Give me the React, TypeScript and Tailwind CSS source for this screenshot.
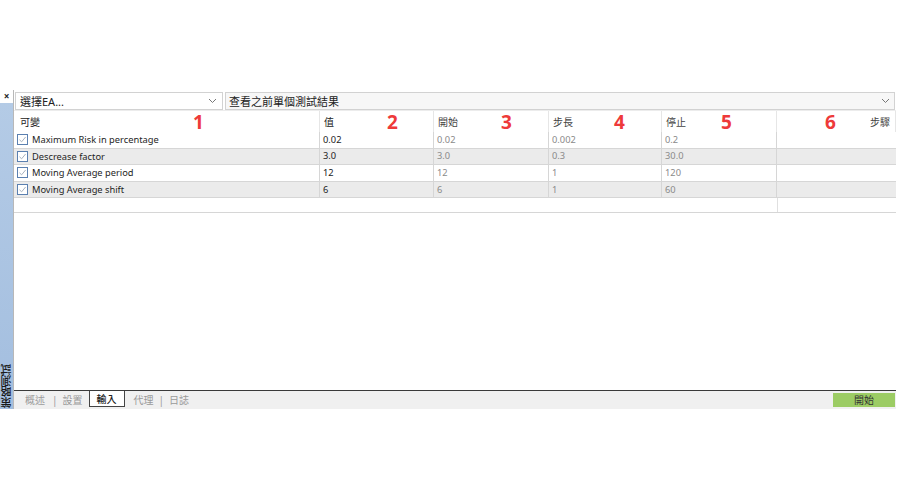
import React from "react";

const rows = [
  { name: "Maximum Risk in percentage", v: ["0.02", "0.02", "0.002", "0.2"], gray: false },
  { name: "Descrease factor", v: ["3.0", "3.0", "0.3", "30.0"], gray: true },
  { name: "Moving Average period", v: ["12", "12", "1", "120"], gray: false },
  { name: "Moving Average shift", v: ["6", "6", "1", "60"], gray: true },
];

const font = { fontFamily: '"Noto Sans", "Noto Sans CJK TC", sans-serif' };

function Chevron() {
  return (
    <svg width="9" height="6" viewBox="0 0 9 6" className="shrink-0">
      <path d="M1 1 L4.5 4.5 L8 1" fill="none" stroke="#777" strokeWidth="1" />
    </svg>
  );
}

function Check() {
  return (
    <div className="w-[11px] h-[11px] border border-[#5b80b0] bg-white flex items-center justify-center shrink-0">
      <svg width="9" height="9" viewBox="0 0 9 9">
        <path d="M1.5 4.8 L3.6 6.8 L7.6 2" fill="none" stroke="#a9b3bf" strokeWidth="1" />
      </svg>
    </div>
  );
}

function Num({ n, left }: { n: string; left: string }) {
  return (
    <span
      className={`absolute top-[2px] ${left} text-[19px] font-bold leading-none text-[#ee3a3a]`}
      style={{ fontFamily: '"Open Sans", sans-serif' }}
    >
      {n}
    </span>
  );
}

export default function App() {
  return (
    <div className="w-[900px] h-[500px] bg-white overflow-hidden text-[#222]" style={font}>
      <div className="pt-[90px] flex h-[409px]">
        {/* sidebar */}
        <div className="w-[14px] flex flex-col border-r border-[#b8b8b8] shrink-0">
          <div className="h-[13px] bg-white flex items-start justify-center text-[10px] font-bold leading-none text-[#222] pt-[1px]">
            ×
          </div>
          <div className="flex-1 bg-gradient-to-b from-[#b4cbe6] to-[#a3bedf] flex flex-col justify-end items-center pb-[1px]">
            <span className="[writing-mode:vertical-rl] rotate-180 text-[11px] leading-[12px] font-medium text-[#1a1a1a]">
              策略測試
            </span>
          </div>
        </div>

        {/* content */}
        <div className="flex-1 flex flex-col">
          {/* selects */}
          <div className="flex pt-[2px] pl-[1px] pr-[5px] h-[20px]">
            <div className="w-[208px] h-[18px] border border-[#d2d2d2] bg-white flex items-center pl-[4px] pr-[5px] text-[11px] leading-none">
              <span className="flex-1">選擇EA...</span>
              <Chevron />
            </div>
            <div className="flex-1 ml-[2px] h-[18px] border border-[#d2d2d2] bg-[#f7f7f7] flex items-center pl-[3px] pr-[4px] text-[11px] leading-none">
              <span className="flex-1">查看之前單個測試結果</span>
              <Chevron />
            </div>
          </div>

          {/* table */}
          <div className="mr-[4px] text-[9.3px]">
            <div className="flex h-[22px] border-t border-[#ececec] text-[10px]">
              <div className="relative w-[306px] border-r border-[#e6e6e6] pl-[6px] pt-[4px]">
                可變
                <Num n="1" left="left-[179px]" />
              </div>
              <div className="relative w-[114px] border-r border-[#e6e6e6] pl-[4px] pt-[4px]">
                值
                <Num n="2" left="left-[67px]" />
              </div>
              <div className="relative w-[115px] border-r border-[#e6e6e6] pl-[4px] pt-[4px] text-[#444]">
                開始
                <Num n="3" left="left-[67px]" />
              </div>
              <div className="relative w-[113px] border-r border-[#e6e6e6] pl-[4px] pt-[4px] text-[#444]">
                步長
                <Num n="4" left="left-[65px]" />
              </div>
              <div className="relative w-[115px] border-r border-[#e6e6e6] pl-[4px] pt-[4px] text-[#444]">
                停止
                <Num n="5" left="left-[59px]" />
              </div>
              <div className="relative flex-1 border-r border-[#e6e6e6] pr-[5px] pt-[4px] text-right text-[#444]">
                步驟
                <Num n="6" left="left-[48px]" />
              </div>
            </div>
            {rows.map((r) => (
              <div
                key={r.name}
                className={`flex h-[16.6px] border-b border-[#d6d6d6] items-stretch ${r.gray ? "bg-[#ebebeb]" : "bg-white"}`}
              >
                <div className="w-[306px] border-r border-[#d6d6d6] flex items-center pl-[3px] gap-[4px] text-[#1e1e1e]">
                  <Check />
                  <span className="leading-none">{r.name}</span>
                </div>
                <div className="w-[114px] border-r border-[#d6d6d6] flex items-center pl-[3px] text-[#222]">
                  {r.v[0]}
                </div>
                <div className="w-[115px] border-r border-[#d6d6d6] flex items-center pl-[3px] text-[#8a8a8a]">
                  {r.v[1]}
                </div>
                <div className="w-[113px] border-r border-[#d6d6d6] flex items-center pl-[3px] text-[#8a8a8a]">
                  {r.v[2]}
                </div>
                <div className="w-[115px] border-r border-[#d6d6d6] flex items-center pl-[3px] text-[#8a8a8a]">
                  {r.v[3]}
                </div>
                <div className="flex-1" />
              </div>
            ))}
            <div className="flex h-[15px] border-b border-[#d6d6d6]">
              <div className="w-[764px] border-r border-[#e0e0e0]" />
              <div className="flex-1" />
            </div>
          </div>

          <div className="flex-1" />

          {/* tab bar */}
          <div className="h-[19px] mr-[4px] border-t border-[#3a3a3a] bg-[#f0f0f0] flex items-start text-[10px] leading-none">
            <span className="ml-[11px] mt-[4px] text-[#9a9a9a]">概述</span>
            <span className="ml-[7px] mt-[4px] text-[#9a9a9a]">|</span>
            <span className="ml-[5px] mt-[4px] text-[#9a9a9a]">設置</span>
            <div className="ml-[6px] w-[36px] h-[16px] bg-white border-l border-r border-b border-[#444] flex items-center justify-center text-[#222] font-medium">
              輸入
            </div>
            <span className="ml-[9px] mt-[4px] text-[#9a9a9a]">代理</span>
            <span className="ml-[5px] mt-[4px] text-[#9a9a9a]">|</span>
            <span className="ml-[5px] mt-[4px] text-[#9a9a9a]">日誌</span>
            <div className="ml-auto mr-[1px] mt-[2px] w-[62px] h-[14px] bg-[#9ccc64] flex items-center justify-center text-[#333]">
              開始
            </div>
          </div>
        </div>
      </div>
    </div>
  );
}
